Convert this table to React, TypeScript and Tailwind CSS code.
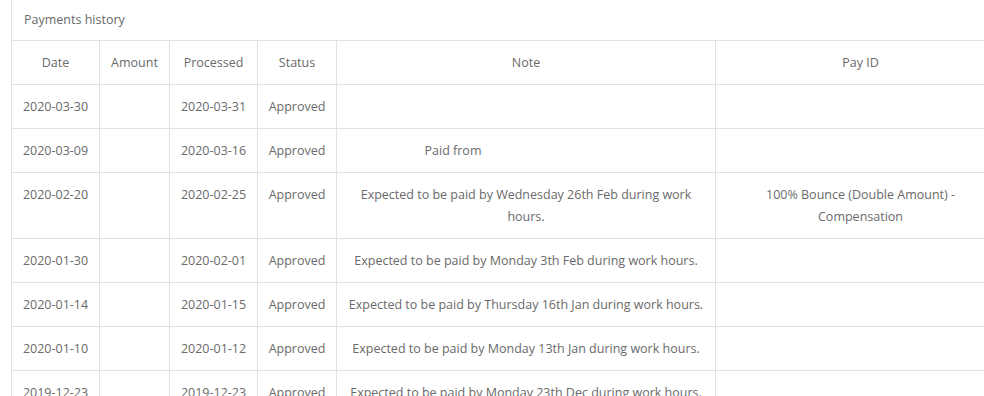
import React from "react";

/* ───────────────── Types ───────────────── */

type Payment = {
  date: string;
  amount: string;
  processed: string;
  status: string;
  note: React.ReactNode;
  payId: string;
};

/* ───────────────── Data ───────────────── */

const payments: Payment[] = [
  { date: "2020-03-30", amount: "", processed: "2020-03-31", status: "Approved", note: "", payId: "" },
  {
    date: "2020-03-09",
    amount: "",
    processed: "2020-03-16",
    status: "Approved",
    note: (
      <>
        Paid from
        <span className="inline-block w-[146px]" />
      </>
    ),
    payId: "",
  },
  {
    date: "2020-02-20",
    amount: "",
    processed: "2020-02-25",
    status: "Approved",
    note: "Expected to be paid by Wednesday 26th Feb during work hours.",
    payId: "100% Bounce (Double Amount) - Compensation",
  },
  {
    date: "2020-01-30",
    amount: "",
    processed: "2020-02-01",
    status: "Approved",
    note: "Expected to be paid by Monday 3th Feb during work hours.",
    payId: "",
  },
  {
    date: "2020-01-14",
    amount: "",
    processed: "2020-01-15",
    status: "Approved",
    note: "Expected to be paid by Thursday 16th Jan during work hours.",
    payId: "",
  },
  {
    date: "2020-01-10",
    amount: "",
    processed: "2020-01-12",
    status: "Approved",
    note: "Expected to be paid by Monday 13th Jan during work hours.",
    payId: "",
  },
  {
    date: "2019-12-23",
    amount: "",
    processed: "2019-12-23",
    status: "Approved",
    note: "Expected to be paid by Monday 23th Dec during work hours.",
    payId: "",
  },
];

const cell =
  "border-r border-b border-[#dee2e6] px-[10px] pt-[11px] pb-[10px] text-center align-top font-normal";

/* ───────────────── Component ───────────────── */

export default function App() {
  return (
    <div className="w-[984px] h-[396px] overflow-hidden bg-white font-['Open_Sans',sans-serif] text-[12.5px] leading-[22px] text-[#6a6a6a]">
      <div className="ml-[11px] w-[1010px] border-l border-[#dee2e6] bg-white">
        <div className="h-[40px] px-3 flex items-center">
          Payments history
        </div>

        <table className="table-fixed border-separate border-spacing-0 w-[994px]">
          <colgroup>
            <col className="w-[88px]" />
            <col className="w-[70px]" />
            <col className="w-[88px]" />
            <col className="w-[79px]" />
            <col className="w-[379px]" />
            <col className="w-[290px]" />
          </colgroup>
          <thead>
            <tr>
              {["Date", "Amount", "Processed", "Status", "Note", "Pay ID"].map((h) => (
                <th key={h} className={`${cell} border-t whitespace-nowrap`}>
                  {h}
                </th>
              ))}
            </tr>
          </thead>
          <tbody>
            {payments.map((p) => (
              <tr key={p.date}>
                <td className={`${cell} whitespace-nowrap`}>{p.date}</td>
                <td className={cell}>{p.amount}</td>
                <td className={`${cell} whitespace-nowrap`}>{p.processed}</td>
                <td className={`${cell} whitespace-nowrap`}>{p.status}</td>
                <td className={cell}>{p.note}</td>
                <td className={cell}>{p.payId}</td>
              </tr>
            ))}
          </tbody>
        </table>
      </div>
    </div>
  );
}
